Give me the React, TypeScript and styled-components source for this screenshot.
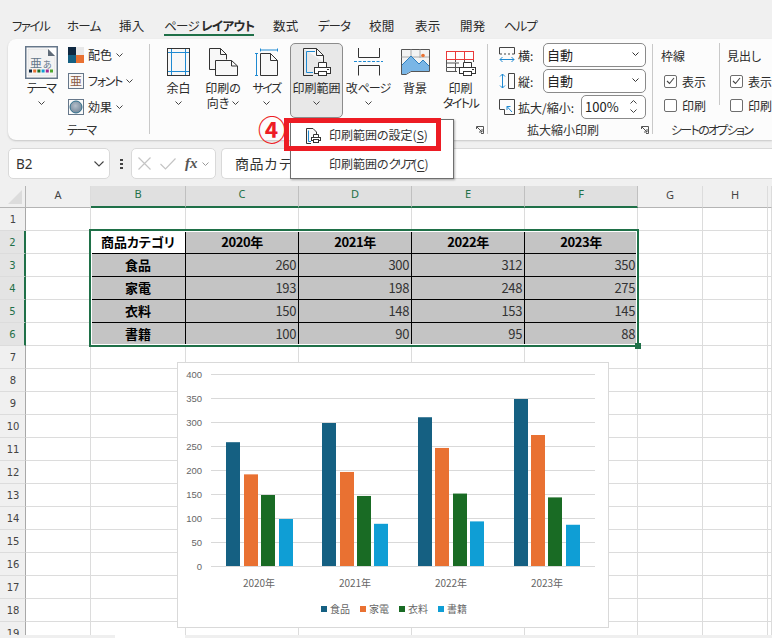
import React from "react";
import styled, { createGlobalStyle } from "styled-components";

const GlobalStyle = createGlobalStyle`
  html, body {
    margin: 0;
    padding: 0;
    background: #f0f0f0;
    overflow: hidden;
  }
  * {
    box-sizing: border-box;
  }
`;

const GREEN = "#1f7048";
const UI_FONT = `"Noto Sans CJK JP", "Noto Sans", sans-serif`;

const Page = styled.div`
  position: relative;
  width: 772px;
  height: 638px;
  overflow: hidden;
  background: #f0f0f0;
  color: #2b2b2b;
  font-family: ${UI_FONT};
  font-size: 12px;
  font-feature-settings: "palt";
`;

// katakana in the reference font is much narrower than in Noto
const Kana = styled.span<{ $ls?: number }>`
  letter-spacing: ${(p) => p.$ls ?? -1.3}px;
`;

const TabBar = styled.div`
  display: flex;
  height: 39px;
  padding: 17px 0 0 12px;
`;

const Tab = styled.div<{ $w: number; $ls: number; $active?: boolean }>`
  width: ${(p) => p.$w}px;
  height: 19px;
  line-height: 17px;
  font-size: 12.5px;
  letter-spacing: ${(p) => p.$ls}px;
  white-space: nowrap;
  span {
    display: inline-block;
    border-bottom: ${(p) => (p.$active ? `2px solid ${GREEN}` : "0")};
    height: 19px;
  }
  b {
    font-weight: 700;
  }
`;

const Ribbon = styled.div`
  display: flex;
  height: 101px;
  margin-left: 8px;
  background: #fcfcfc;
  border-radius: 8px 0 0 8px;
  box-shadow: 0 1px 2px rgba(0, 0, 0, 0.18);
`;

const Group = styled.div<{ $w: number; $last?: boolean }>`
  position: relative;
  display: flex;
  flex-direction: column;
  width: ${(p) => p.$w}px;
  flex: none;
  &::after {
    content: "";
    display: ${(p) => (p.$last ? "none" : "block")};
    position: absolute;
    right: 0;
    top: 5px;
    bottom: 6px;
    width: 1px;
    background: #c9c9c9;
  }
`;

const GroupBody = styled.div<{ $pl: number }>`
  display: flex;
  height: 80px;
  padding: 4px 0 0 ${(p) => p.$pl}px;
`;

const GroupLabel = styled.div<{ $pl: number; $pr?: number }>`
  display: flex;
  align-items: center;
  justify-content: space-between;
  height: 21px;
  padding: 0 ${(p) => p.$pr ?? 0}px 0 ${(p) => p.$pl}px;
  font-size: 12px;
  color: #333;
  white-space: nowrap;
  svg {
    margin-left: auto;
  }
`;

const LargeButton = styled.div<{ $w: number; $active?: boolean; $ml?: number }>`
  display: flex;
  flex-direction: column;
  align-items: center;
  width: ${(p) => p.$w}px;
  height: 75px;
  margin-left: ${(p) => p.$ml ?? 0}px;
  padding-top: 4px;
  border: 1px solid ${(p) => (p.$active ? "#8c8c8c" : "transparent")};
  border-radius: 5px;
  background: ${(p) => (p.$active ? "#e8e8e8" : "transparent")};
  font-size: 12px;
  line-height: 15px;
  white-space: nowrap;
`;

const LargeIcon = styled.div<{ $tall?: boolean }>`
  display: flex;
  align-items: center;
  justify-content: center;
  height: ${(p) => (p.$tall ? 33 : 28)}px;
  margin-top: ${(p) => (p.$tall ? -2 : 0)}px;
  margin-bottom: ${(p) => (p.$tall ? 1 : 4)}px;
`;

const TextLine = styled.div`
  display: flex;
  align-items: center;
  justify-content: center;
  gap: 3px;
  height: 15px;
`;

const SmallStack = styled.div`
  display: flex;
  flex-direction: column;
  gap: 10px;
  padding-top: 4px;
  margin-left: 3px;
`;

const SmallButton = styled.div`
  display: flex;
  align-items: center;
  gap: 4px;
  height: 16px;
  white-space: nowrap;
`;

const SmallText = styled.span`
  position: relative;
  top: -1px;
`;

const ScaleStack = styled.div`
  display: flex;
  flex-direction: column;
  gap: 2px;
`;

const ScaleRow = styled.div`
  display: flex;
  align-items: center;
  height: 24px;
  width: 147px;
  white-space: nowrap;
  svg:first-child {
    margin-right: 3px;
  }
`;

const InputBox = styled.div<{ $w: number }>`
  display: flex;
  align-items: center;
  justify-content: space-between;
  width: ${(p) => p.$w}px;
  height: 24px;
  margin-left: auto;
  padding: 0 3px 2px 3px;
  background: #fff;
  border: 1px solid #8a8a8a;
  border-radius: 5px;
  font-size: 13px;
  color: #222;
`;

const Spin = styled.div`
  display: flex;
  flex-direction: column;
  gap: 5px;
  padding-right: 2px;
`;

const OptionColumn = styled.div<{ $w: number; $divider?: boolean }>`
  width: ${(p) => p.$w}px;
  height: 62px;
  flex: none;
  padding-top: 6px;
  padding-left: ${(p) => (p.$divider ? 8 : 7)}px;
  border-right: ${(p) => (p.$divider ? "1px solid #c9c9c9" : "0")};
  white-space: nowrap;
`;

const OptionTitle = styled.div`
  height: 14px;
  line-height: 14px;
  margin-bottom: 6px;
`;

const OptionRow = styled.div`
  display: flex;
  align-items: center;
  gap: 5px;
  height: 24px;
  padding-left: 3px;
`;

const CheckBox = styled.div`
  display: flex;
  align-items: center;
  justify-content: center;
  width: 13px;
  height: 13px;
  background: #fff;
  border: 1px solid #6e6e6e;
  border-radius: 2px;
`;

const FormulaBar = styled.div`
  display: flex;
  align-items: center;
  height: 31px;
  margin: 8px 0 7px 8px;
`;

const FieldBox = styled.div<{ $w?: number; $ml: number }>`
  display: flex;
  align-items: center;
  ${(p) => (p.$w ? `width: ${p.$w}px;` : "flex: 1;")}
  height: 31px;
  margin-left: ${(p) => p.$ml}px;
  background: #fff;
  border: 1px solid #d9d9d9;
  border-right-width: ${(p) => (p.$w ? 1 : 0)}px;
  border-radius: ${(p) => (p.$w ? "5px" : "5px 0 0 5px")};
  white-space: nowrap;
`;

const NameText = styled.span`
  flex: 1;
  padding-left: 7px;
  font-family: "Noto Sans", sans-serif;
  font-size: 13.5px;
  color: #333;
`;

const NameArrow = styled.span`
  display: flex;
  padding-right: 5px;
`;

const FxArrow = styled.span`
  display: flex;
  margin-left: 4px;
`;

const FormulaText = styled.span`
  padding: 0 0 2px 13px;
  font-size: 14px;
  letter-spacing: 0.5px;
  font-feature-settings: normal;
  color: #333;
`;

const FxText = styled.span`
  margin-left: 9px;
  font-family: "Liberation Serif", serif;
  font-style: italic;
  font-weight: 700;
  font-size: 15px;
  color: #555;
`;

const CrossMark = styled.svg`
  margin-left: 6px;
`;

const TickMark = styled.svg`
  margin-left: 9px;
`;

const DotsMark = styled.svg`
  margin-left: 10px;
`;

const Sheet = styled.div`
  position: relative;
  height: 449px;
  overflow: hidden;
  background: #fff;
  display: grid;
  grid-template-columns: 26px 65px 95px 113px 113px 113px 113px 65px 65px 4px;
  grid-auto-rows: 23px;
  grid-template-rows: 22px;
`;

const Corner = styled.div`
  display: flex;
  padding: 4px 3px 3px 8px;
  background: #f0f0f0;
  border-right: 1px solid #b4b4b4;
  border-bottom: 1px solid #b4b4b4;
  &::before {
    content: "";
    flex: 1;
    background: #dcdcdc;
    clip-path: polygon(100% 0, 100% 100%, 0 100%);
  }
`;

const ColHead = styled.div<{ $sel?: boolean }>`
  display: flex;
  align-items: center;
  justify-content: center;
  font-family: "Noto Sans", sans-serif;
  font-size: 11px;
  padding-bottom: 5px;
  color: ${(p) => (p.$sel ? GREEN : "#444")};
  background: ${(p) => (p.$sel ? "#e0e0e0" : "#f0f0f0")};
  border-right: 1px solid ${(p) => (p.$sel ? "#c0c0c0" : "#dcdcdc")};
  border-bottom: ${(p) => (p.$sel ? `2px solid ${GREEN}` : "1px solid #b4b4b4")};
`;

const RowHead = styled.div<{ $sel?: boolean }>`
  display: flex;
  align-items: center;
  justify-content: center;
  font-family: "DejaVu Sans", sans-serif;
  font-size: 10px;
  padding-left: 1px;
  color: ${(p) => (p.$sel ? GREEN : "#444")};
  background: ${(p) => (p.$sel ? "#e4e4e4" : "#f0f0f0")};
  border-right: ${(p) => (p.$sel ? `2px solid ${GREEN}` : "1px solid #a8a8a8")};
  border-bottom: 1px solid #dcdcdc;
`;

const Cell = styled.div<{ $fill?: boolean; $grid?: boolean; $head?: boolean; $num?: boolean }>`
  display: flex;
  align-items: center;
  justify-content: ${(p) => (p.$num ? "flex-end" : "center")};
  padding: 0 ${(p) => (p.$num ? 2 : 0)}px 2px 0;
  background: ${(p) => (p.$fill ? "#c4c4c4" : "#fff")};
  border-right: 1px solid ${(p) => (p.$grid ? "#000" : "#dcdcdc")};
  border-bottom: 1px solid ${(p) => (p.$grid ? "#000" : "#dcdcdc")};
  font-size: 13px;
  letter-spacing: ${(p) => (p.$num ? -0.4 : 0)}px;
  font-weight: ${(p) => (p.$head ? 700 : 400)};
  color: ${(p) => (p.$num ? "#333" : "#000")};
  white-space: nowrap;
`;

const Selection = styled.div`
  position: absolute;
  left: 89px;
  top: 43px;
  width: 550px;
  height: 118px;
  border: 2px solid ${GREEN};
  box-shadow: inset 0 0 0 1px #fff;
  pointer-events: none;
`;

const FillHandle = styled.div`
  position: absolute;
  right: -4px;
  bottom: -4px;
  width: 6px;
  height: 6px;
  background: ${GREEN};
`;

const ChartBox = styled.div`
  position: absolute;
  left: 177px;
  top: 176px;
  width: 432px;
  height: 266px;
  background: #fff;
  border: 1px solid #d9d9d9;
  svg {
    display: block;
  }
`;

const Footer = styled.div`
  display: flex;
  height: 3px;
`;

const FooterPart = styled.div<{ $w?: number; $gap?: boolean }>`
  ${(p) => (p.$w ? `width: ${p.$w}px;` : "flex: 1;")}
  background: ${(p) => (p.$gap ? "#fff" : "#efefef")};
`;

const Dropdown = styled.div`
  position: absolute;
  left: 290px;
  top: 119px;
  width: 164px;
  height: 60px;
  padding: 1px 0;
  background: #fff;
  border: 1px solid #6f6f6f;
  box-shadow: 1px 1px 2px rgba(0, 0, 0, 0.3);
`;

const MenuItem = styled.div`
  position: relative;
  height: 29px;
  line-height: 27px;
  padding-left: 38px;
  font-size: 12px;
  color: #333;
  white-space: nowrap;
  svg {
    position: absolute;
    left: 15px;
    top: 7px;
  }
  u {
    text-underline-offset: 2px;
  }
`;

const RedFrame = styled.div`
  position: absolute;
  left: 284px;
  top: 118px;
  width: 157px;
  height: 33px;
  border: 5px solid #ed1c24;
  pointer-events: none;
`;

const Callout = styled.div`
  position: absolute;
  left: 257px;
  top: 111px;
  width: 30px;
  height: 36px;
  line-height: 36px;
  text-align: center;
  font-size: 28px;
  font-weight: 700;
  color: #ed1c24;
`;

const Chevron = ({ c = "#444" }: { c?: string }) => (
  <svg width="7" height="4" viewBox="0 0 7 4">
    <path d="M.5.5 3.5 3.5 6.5.5" fill="none" stroke={c} strokeWidth="1" />
  </svg>
);

const SPIN_UP = "M.5 3.5 3.5.5 6.5 3.5";

const Launcher = () => (
  <svg width="8" height="8" viewBox="0 0 8 8">
    <path d="M.5 3V.5H7.5V7.5H5M1 1 6 6M6 3V6H3" fill="none" stroke="#555" strokeWidth="1" />
  </svg>
);

const Check = () => (
  <svg width="9" height="8" viewBox="0 0 9 8">
    <path d="M1 4 3.5 6.5 8 1" fill="none" stroke="#444" strokeWidth="1.1" />
  </svg>
);

const ThemeIcon = () => (
  <svg width="33" height="33" viewBox="0 0 33 33">
    <rect x=".75" y=".75" width="31.5" height="31.5" fill="#fff" stroke="#66778a" strokeWidth="1.5" />
    <path d="M3 3H23L30 10V30H3Z" fill="#f3f3f3" stroke="#d0d0d0" strokeWidth=".5" />
    <path d="M23 3 30 10H23Z" fill="#5f6b78" />
    <text x="5" y="22" fontSize="12" fill="#66778a" fontFamily={UI_FONT}>亜</text>
    <text x="18" y="22" fontSize="9" fill="#66778a" fontFamily={UI_FONT}>あ</text>
    {["#0e2841", "#e97132", "#196b24", "#0f9ed5", "#a02b93", "#4ea72e"].map((c, i) => (
      <rect key={c} x={4 + i * 4.2} y="23.5" width="3" height="3" fill={c} />
    ))}
  </svg>
);

const ColorsIcon = () => (
  <svg width="16" height="16" viewBox="0 0 16 16">
    <rect width="8" height="8" fill="#0e2841" />
    <rect x="8" width="8" height="8" fill="#e8e8e8" />
    <rect y="8" width="8" height="8" fill="#156082" />
    <rect x="8" y="8" width="8" height="8" fill="#e97132" />
  </svg>
);

const FontIcon = () => (
  <svg width="16" height="16" viewBox="0 0 16 16">
    <rect x=".5" y=".5" width="15" height="15" fill="#f7f7f7" stroke="#66778a" />
    <text x="2" y="13" fontSize="12" fill="#8a5a44" fontFamily={UI_FONT}>亜</text>
  </svg>
);

const EffectsIcon = () => (
  <svg width="16" height="16" viewBox="0 0 16 16">
    <defs>
      <radialGradient id="fx" cx="45%" cy="40%" r="60%">
        <stop offset="0" stopColor="#b4bfca" />
        <stop offset="1" stopColor="#73879a" />
      </radialGradient>
    </defs>
    <rect x=".5" y=".5" width="15" height="15" fill="#fafafa" stroke="#66778a" />
    <circle cx="8" cy="8" r="6" fill="url(#fx)" stroke="#2f6f8c" />
  </svg>
);

const MarginIcon = () => (
  <svg width="23" height="28" viewBox="0 0 23 28">
    <rect x=".5" y=".5" width="22" height="27" fill="#f8f8f8" stroke="#333" />
    <path d="M4.5 1V27M18.5 1V27M1 4.5H22M1 23.5H22" fill="none" stroke="#1f8ad2" />
  </svg>
);

const OrientationIcon = () => (
  <svg width="29" height="28" viewBox="0 0 29 28">
    <path d="M6.5 21.5H.5V.5H11.5L17.5 6.5V11.5" fill="#f8f8f8" stroke="#333" />
    <path d="M11.5.5V6.5H17.5" fill="none" stroke="#333" />
    <path d="M6.5 12.5H22.5L28.5 18V27.5H6.5Z" fill="#f8f8f8" stroke="#333" />
    <path d="M22.5 12.5V18H28.5" fill="none" stroke="#333" />
  </svg>
);

const SizeIcon = () => (
  <svg width="23" height="28" viewBox="0 0 23 28">
    <path d="M5.5 5.5H15.5L22.5 12.5V27.5H5.5Z" fill="#f8f8f8" stroke="#333" />
    <path d="M15.5 5.5V12.5H22.5" fill="none" stroke="#333" />
    <path d="M5.5.5V3.5M5.5 2H22.5M22.5.5V3.5M0 5.5H3M1.5 5.5V27.5M0 27.5H3" fill="none" stroke="#1f8ad2" />
  </svg>
);

const PrinterPart = ({ x, y }: { x: number; y: number }) => (
  <g transform={`translate(${x} ${y})`}>
    <path d="M4.5 5V.5H12.5V5" fill="#fff" stroke="#333" />
    <rect x=".5" y="5.5" width="16" height="6" fill="#fff" stroke="#333" />
    <rect x="4.5" y="9.5" width="8" height="4" fill="#fff" stroke="#333" />
    <rect x="13" y="7" width="2" height="1" fill="#333" />
  </g>
);

const PrintAreaIcon = () => (
  <svg width="28" height="28" viewBox="0 0 28 28">
    <path d="M.5.5H13.5L20.5 7.5V14M10 27.5H.5Z" fill="#f8f8f8" stroke="#333" />
    <path d="M.5.5V27.5M13.5.5V7.5H20.5" fill="none" stroke="#333" />
    <path d="M3.5 3.5H12M3.5 3.5V24.5H10" fill="none" stroke="#1f8ad2" />
    <PrinterPart x={11} y={14} />
  </svg>
);

const PrintAreaSmallIcon = () => (
  <svg width="15" height="16" viewBox="0 0 15 16">
    <path d="M.5 15.5V.5H7L10.5 4V7M5 15.5H.5" fill="#f8f8f8" stroke="#333" />
    <path d="M2.5 2.5V13.5H5" fill="none" stroke="#1f8ad2" />
    <path d="M7.5 9V6.5H12.5V9" fill="#fff" stroke="#333" />
    <rect x="5.5" y="9.5" width="9" height="3" fill="#fff" stroke="#333" />
    <rect x="7.5" y="11.5" width="5" height="3" fill="#fff" stroke="#333" />
  </svg>
);

const BreakIcon = () => (
  <svg width="29" height="28" viewBox="0 0 29 28">
    <path d="M4.5 0V9.5H25.5V0M4.5 27.5V17.5H25.5V27.5" fill="none" stroke="#333" />
    <path d="M0 13.5H29" fill="none" stroke="#1f8ad2" strokeDasharray="3 1.5" />
  </svg>
);

const BackgroundIcon = () => (
  <svg width="29" height="28" viewBox="0 0 29 28">
    <path d="M.5 1.5H28.5V23.5H10L5 26.5H.5Z" fill="#f3f3f3" stroke="#555" />
    <path d="M10 1.5V9M19 1.5V10M.5 9H28" fill="none" stroke="#aaa" />
    <circle cx="22" cy="7.5" r="1.8" fill="#e97132" />
    <path d="M1 17 10 8 18 16 22 12 28 18V23H10L5 26H1Z" fill="#7ab6e6" />
    <path d="M1 17 10 8 18 16 22 12 28 18" fill="none" stroke="#2d7fbe" />
  </svg>
);

const PrintTitleIcon = () => (
  <svg width="30" height="28" viewBox="0 0 30 28">
    <path d="M.5 11V19.5M.5 19.5H13M9.5 11V14M.5 15H13M9.5 15V23.5M.5 19.5V23.5H11" fill="none" stroke="#555" />
    <path d="M18.5 11V14M27.5 11V14" fill="none" stroke="#555" />
    <rect x=".5" y="3.5" width="27" height="8" fill="#fff" stroke="#ea3a3a" />
    <path d="M9.5 3.5V11.5M18.5 3.5V11.5" stroke="#ea3a3a" />
    <PrinterPart x={13} y={14} />
  </svg>
);

const WidthIcon = () => (
  <svg width="16" height="16" viewBox="0 0 16 16">
    <path d="M.5 7V.5H15.5V7M.5 7H3M5 7H7M9 7H11M13 7H15.5" fill="none" stroke="#444" />
    <path d="M1 12.5H15M1 12.5 3.5 10M1 12.5 3.5 15M15 12.5 12.5 10M15 12.5 12.5 15" fill="none" stroke="#1f8ad2" />
  </svg>
);

const HeightIcon = () => (
  <svg width="16" height="16" viewBox="0 0 16 16">
    <path d="M15.5.5H9.5V15.5H15.5ZM9.5 15.5" fill="none" stroke="#444" />
    <path d="M3.5 1V15M3.5 1 1 3.5M3.5 1 6 3.5M3.5 15 1 12.5M3.5 15 6 12.5" fill="none" stroke="#1f8ad2" />
  </svg>
);

const ScaleIcon = () => (
  <svg width="16" height="16" viewBox="0 0 16 16">
    <path d="M.5 10V.5H15.5V15.5H5.5V10.5H.5" fill="none" stroke="#444" />
    <path d="M13 13 8 7.5M8 11V7.5H11.5" fill="none" stroke="#1f8ad2" />
  </svg>
);

const Cross = () => (
  <CrossMark width="13" height="13" viewBox="0 0 13 13">
    <path d="M.5.5 12.5 12.5M12.5.5.5 12.5" stroke="#c4c4c4" strokeWidth="1.2" fill="none" />
  </CrossMark>
);

const Tick = () => (
  <TickMark width="16" height="12" viewBox="0 0 16 12">
    <path d="M.5 6 5.5 11 15.5.5" stroke="#c4c4c4" strokeWidth="1.2" fill="none" />
  </TickMark>
);

const Dots = () => (
  <DotsMark width="3" height="10" viewBox="0 0 3 10">
    <path d="M0 0H3V2H0ZM0 4H3V6H0ZM0 8H3V10H0Z" fill="#444" />
  </DotsMark>
);

const columns = ["A", "B", "C", "D", "E", "F", "G", "H"];
const selectedCols = ["B", "C", "D", "E", "F"];
const years = ["2020年", "2021年", "2022年", "2023年"];
const tableRows = [
  { name: "食品", values: [260, 300, 312, 350], color: "#156082" },
  { name: "家電", values: [193, 198, 248, 275], color: "#e97132" },
  { name: "衣料", values: [150, 148, 153, 145], color: "#196b24" },
  { name: "書籍", values: [100, 90, 95, 88], color: "#0f9ed5" },
];

const tabs: { label: React.ReactNode; w: number; ls: number; active?: boolean }[] = [
  { label: "ファイル", w: 55, ls: -1.5 },
  { label: "ホーム", w: 52, ls: -0.7 },
  { label: "挿入", w: 45, ls: 0.3 },
  { label: <>ページ <b>レイアウト</b></>, w: 109, ls: -0.7, active: true },
  { label: "数式", w: 45, ls: 0.3 },
  { label: "データ", w: 51, ls: -1 },
  { label: "校閲", w: 46, ls: 0.3 },
  { label: "表示", w: 45, ls: 0.3 },
  { label: "開発", w: 44, ls: 0.3 },
  { label: "ヘルプ", w: 40, ls: -1 },
];

const BlankCells = ({ row, from, to }: { row: number; from: number; to: number }) => (
  <>
    {Array.from({ length: to - from }, (_, i) => (
      <Cell key={`${row}-${from + i}`} />
    ))}
  </>
);

const Chart = () => {
  const groupX = [
    [226, 244, 261, 279],
    [322, 340, 357, 374],
    [418, 435, 453, 470],
    [514, 531, 548, 566],
  ];
  const legendX = [321, 360, 399, 438];
  return (
    <svg width="430" height="264" viewBox="178 363 430 264" fontFamily={UI_FONT}>
      {[0, 50, 100, 150, 200, 250, 300, 350, 400].map((v) => {
        const y = 566 - v * 0.48;
        return (
          <g key={v}>
            <line x1="211" x2="595" y1={y + 0.5} y2={y + 0.5} stroke="#d9d9d9" />
            <text x="202" y={y + 4} fontSize="9.5" fill="#666" textAnchor="end" fontFamily="Liberation Sans, sans-serif">
              {v}
            </text>
          </g>
        );
      })}
      {tableRows.map((row, s) =>
        row.values.map((v, g) => (
          <rect key={`${s}-${g}`} x={groupX[g][s]} y={567 - v * 0.48} width="14" height={v * 0.48 - 1} fill={row.color} />
        )),
      )}
      {years.map((y, i) => (
        <text key={y} x={259 + i * 96} y="587" fontSize="10" fill="#666" textAnchor="middle">
          {y}
        </text>
      ))}
      {tableRows.map((row, i) => (
        <g key={row.name}>
          <rect x={legendX[i]} y="606" width="6" height="6" fill={row.color} />
          <text x={legendX[i] + 9} y="613" fontSize="10" fill="#666">
            {row.name}
          </text>
        </g>
      ))}
    </svg>
  );
};

export default function App() {
  return (
    <>
      <GlobalStyle />
      <Page>
        <TabBar>
          {tabs.map((t, i) => (
            <Tab key={i} $w={t.w} $ls={t.ls} $active={t.active}>
              <span>{t.label}</span>
            </Tab>
          ))}
        </TabBar>

        <Ribbon>
          <Group $w={142}>
            <GroupBody $pl={9}>
              <LargeButton $w={48}>
                <LargeIcon $tall><ThemeIcon /></LargeIcon>
                <TextLine><Kana $ls={-1.6}>テーマ</Kana></TextLine>
                <TextLine><Chevron /></TextLine>
              </LargeButton>
              <SmallStack>
                <SmallButton><ColorsIcon /><SmallText>配色</SmallText> <Chevron /></SmallButton>
                <SmallButton><FontIcon /><SmallText><Kana>フォント</Kana></SmallText> <Chevron /></SmallButton>
                <SmallButton><EffectsIcon /><SmallText>効果</SmallText> <Chevron /></SmallButton>
              </SmallStack>
            </GroupBody>
            <GroupLabel $pl={59}><Kana $ls={-1.6}>テーマ</Kana></GroupLabel>
          </Group>

          <Group $w={338}>
            <GroupBody $pl={7}>
              <LargeButton $w={43}>
                <LargeIcon><MarginIcon /></LargeIcon>
                <TextLine>余白</TextLine>
                <TextLine><Chevron /></TextLine>
              </LargeButton>
              <LargeButton $w={46}>
                <LargeIcon><OrientationIcon /></LargeIcon>
                <TextLine>印刷の</TextLine>
                <TextLine>向き <Chevron /></TextLine>
              </LargeButton>
              <LargeButton $w={41}>
                <LargeIcon><SizeIcon /></LargeIcon>
                <TextLine><Kana $ls={-1.6}>サイズ</Kana></TextLine>
                <TextLine><Chevron /></TextLine>
              </LargeButton>
              <LargeButton $w={53} $ml={3} $active>
                <LargeIcon><PrintAreaIcon /></LargeIcon>
                <TextLine>印刷範囲</TextLine>
                <TextLine><Chevron /></TextLine>
              </LargeButton>
              <LargeButton $w={50}>
                <LargeIcon><BreakIcon /></LargeIcon>
                <TextLine><span>改<Kana $ls={-1}>ページ</Kana></span></TextLine>
                <TextLine><Chevron /></TextLine>
              </LargeButton>
              <LargeButton $w={44}>
                <LargeIcon><BackgroundIcon /></LargeIcon>
                <TextLine>背景</TextLine>
              </LargeButton>
              <LargeButton $w={47}>
                <LargeIcon><PrintTitleIcon /></LargeIcon>
                <TextLine>印刷</TextLine>
                <TextLine><Kana $ls={-1.5}>タイトル</Kana></TextLine>
              </LargeButton>
            </GroupBody>
            <GroupLabel $pl={0} $pr={4}><Launcher /></GroupLabel>
          </Group>

          <Group $w={165}>
            <GroupBody $pl={11}>
              <ScaleStack>
                <ScaleRow>
                  <WidthIcon />横:
                  <InputBox $w={103}>自動 <Chevron c="#333" /></InputBox>
                </ScaleRow>
                <ScaleRow>
                  <HeightIcon />縦:
                  <InputBox $w={103}>自動 <Chevron c="#333" /></InputBox>
                </ScaleRow>
                <ScaleRow>
                  <ScaleIcon />拡大/縮小:
                  <InputBox $w={65}>
                    100%
                    <Spin>
                      <svg width="7" height="4" viewBox="0 0 7 4">
                        <path d={SPIN_UP} fill="none" stroke="#444" />
                      </svg>
                      <Chevron />
                    </Spin>
                  </InputBox>
                </ScaleRow>
              </ScaleStack>
            </GroupBody>
            <GroupLabel $pl={39} $pr={4}>拡大縮小印刷<Launcher /></GroupLabel>
          </Group>

          <Group $w={119} $last>
            <GroupBody $pl={0}>
              <OptionColumn $w={67} $divider>
                <OptionTitle>枠線</OptionTitle>
                <OptionRow><CheckBox><Check /></CheckBox>表示</OptionRow>
                <OptionRow><CheckBox />印刷</OptionRow>
              </OptionColumn>
              <OptionColumn $w={52}>
                <OptionTitle>見出し</OptionTitle>
                <OptionRow><CheckBox><Check /></CheckBox>表示</OptionRow>
                <OptionRow><CheckBox />印刷</OptionRow>
              </OptionColumn>
            </GroupBody>
            <GroupLabel $pl={18}><Kana $ls={-1.7}>シートのオプション</Kana></GroupLabel>
          </Group>
        </Ribbon>

        <FormulaBar>
          <FieldBox $w={102} $ml={0}>
            <NameText>B2</NameText>
            <NameArrow>
              <svg width="10" height="6" viewBox="0 0 10 6">
                <path d="M.5.5 5 5 9.5.5" fill="none" stroke="#444" strokeWidth="1.1" />
              </svg>
            </NameArrow>
          </FieldBox>
          <Dots />
          <FieldBox $w={85} $ml={8}>
            <Cross />
            <Tick />
            <FxText>fx</FxText>
            <FxArrow>
              <Chevron c="#999" />
            </FxArrow>
          </FieldBox>
          <FieldBox $ml={5}>
            <FormulaText>商品カテゴリ</FormulaText>
          </FieldBox>
        </FormulaBar>

        <Sheet>
          <Corner />
          {columns.map((c) => (
            <ColHead key={c} $sel={selectedCols.includes(c)}>{c}</ColHead>
          ))}
          <ColHead />

          <RowHead>1</RowHead>
          <BlankCells row={1} from={0} to={9} />

          <RowHead $sel>2</RowHead>
          <Cell />
          <Cell $head $grid>商品カテゴリ</Cell>
          {years.map((y) => (
            <Cell key={y} $head $fill $grid><Kana $ls={-0.4}>{y}</Kana></Cell>
          ))}
          <BlankCells row={2} from={6} to={9} />

          {tableRows.map((row, i) => (
            <React.Fragment key={row.name}>
              <RowHead $sel>{i + 3}</RowHead>
              <Cell />
              <Cell $fill $grid $head>{row.name}</Cell>
              {row.values.map((v, j) => (
                <Cell key={j} $fill $grid $num>{v}</Cell>
              ))}
              <BlankCells row={i + 3} from={6} to={9} />
            </React.Fragment>
          ))}

          {Array.from({ length: 13 }, (_, i) => (
            <React.Fragment key={i}>
              <RowHead>{i + 7}</RowHead>
              <BlankCells row={i + 7} from={0} to={9} />
            </React.Fragment>
          ))}

          <Selection><FillHandle /></Selection>
          <ChartBox><Chart /></ChartBox>
        </Sheet>

        <Footer>
          <FooterPart $w={115} />
          <FooterPart $w={70} $gap />
          <FooterPart />
        </Footer>

        <Dropdown>
          <MenuItem><PrintAreaSmallIcon />印刷範囲の設定(<u>S</u>)</MenuItem>
          <MenuItem>印刷範囲の<Kana $ls={-2.5}>クリア</Kana>(<u>C</u>)</MenuItem>
        </Dropdown>
        <RedFrame />
        <Callout>④</Callout>
      </Page>
    </>
  );
}
